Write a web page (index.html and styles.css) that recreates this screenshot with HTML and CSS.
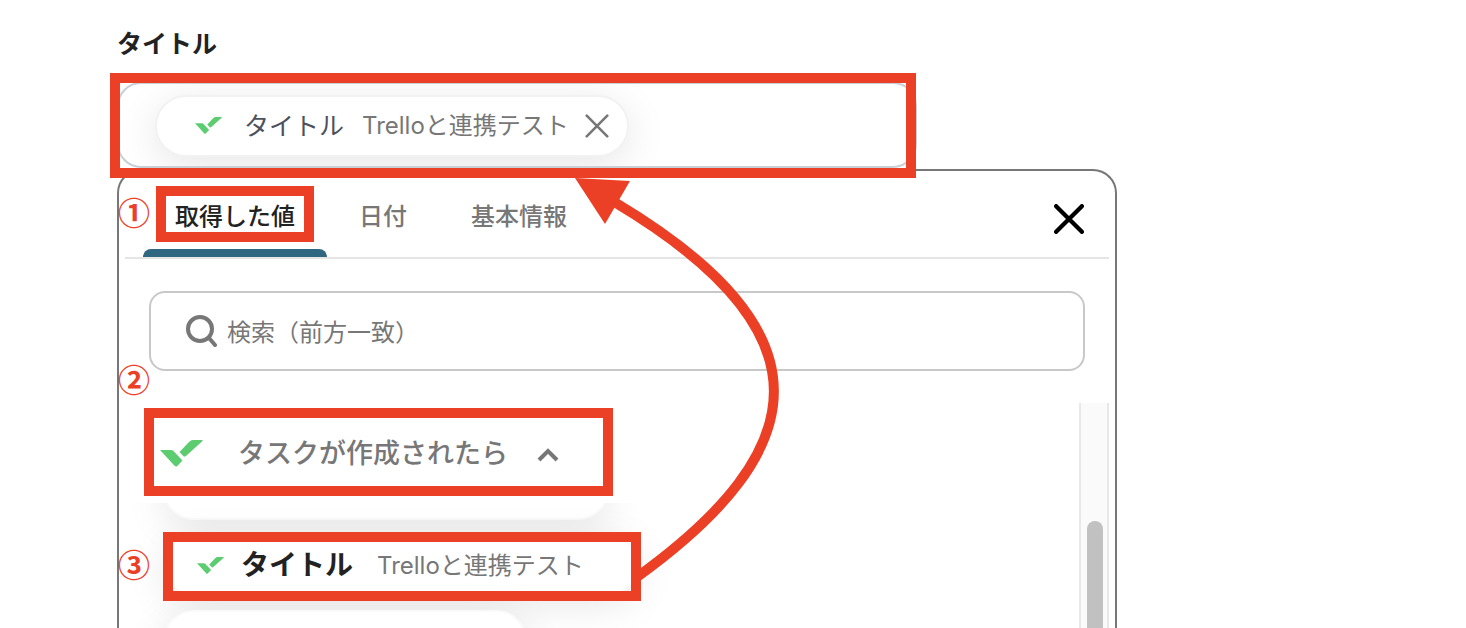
FILE: index.html
```html
<!DOCTYPE html>
<html lang="ja">
<head>
    <meta charset="UTF-8">
    <meta name="viewport" content="width=device-width, initial-scale=1.0">
    <title>タイトル</title>
    <link rel="stylesheet" href="styles.css">
</head>
<body>
    <svg class="defs" aria-hidden="true">
        <symbol id="logo" viewBox="0 0 43 27">
            <path d="M0 10h11q1.500 0 2.500 1l9 9.500-5.500 5.700q-1 .8-2.500-.5z"/>
            <path d="M19.500 12L29 2q2-2 4-2h9.500q.5.500-.5 1.500L26.500 15.500q-1 1-2.500 1.200z"/>
        </symbol>
        <symbol id="cross" viewBox="0 0 28 28">
            <path d="M2 2l24 24M26 2L2 26"/>
        </symbol>
    </svg>

    <main class="form">
        <h1 class="label">タイトル</h1>
        <div class="field">
            <div class="chip">
                <svg class="logo"><use href="#logo"/></svg>
                <span class="chip-name">タイトル</span>
                <span class="chip-value">Trelloと連携テスト</span>
                <button class="icon-button chip-remove" aria-label="削除"><svg class="cross"><use href="#cross"/></svg></button>
            </div>
        </div>

        <section class="panel">
            <div class="tabs">
                <button class="tab active">取得した値</button>
                <button class="tab">日付</button>
                <button class="tab">基本情報</button>
                <button class="icon-button panel-close" aria-label="閉じる"><svg class="cross"><use href="#cross"/></svg></button>
            </div>

            <label class="search">
                <svg class="search-icon" viewBox="0 0 32 32"><circle cx="15" cy="14" r="12"/><path d="M24 23l6 7"/></svg>
                <input type="text" placeholder="検索（前方一致）" aria-label="検索">
            </label>

            <div class="values">
                <div class="values-body">
                    <button class="group">
                        <svg class="logo logo-large"><use href="#logo"/></svg>
                        <span class="group-name">タスクが作成されたら</span>
                        <svg class="caret" viewBox="0 0 24 14"><path d="M3 12l9-9 9 9"/></svg>
                    </button>
                    <div class="list">
                        <div class="item item-first"></div>
                        <button class="item">
                            <svg class="logo"><use href="#logo"/></svg>
                            <span class="item-name">タイトル</span>
                            <span class="chip-value">Trelloと連携テスト</span>
                        </button>
                        <div class="item item-last"></div>
                    </div>
                </div>
                <div class="scrollbar"><div class="thumb"></div></div>
            </div>
        </section>
    </main>

    <!-- 操作手順の注釈 -->
    <div class="mark mark-field"></div>
    <div class="mark mark-tab"></div>
    <div class="mark mark-group"></div>
    <div class="mark mark-item"></div>
    <span class="step step-1">①</span>
    <span class="step step-2">②</span>
    <span class="step step-3">③</span>
    <svg class="arrow" viewBox="0 0 220 410" aria-hidden="true">
        <path class="arrow-line" d="M67 407C243 280 263 163 46 33"/>
        <path class="arrow-head" d="M5 8l55 3-25 43z"/>
    </svg>
</body>
</html>
```

FILE: styles.css
```css
* {
    box-sizing: border-box;
}
body {
    margin: 0;
    height: 100vh;
    overflow: hidden;
    position: relative;
    background: #fff;
    color: #222;
    font-family: Inter, "Noto Sans CJK JP", sans-serif;
    font-size: 24px;
}
button {
    font: inherit;
    color: inherit;
    background: none;
    border: none;
    padding: 0;
    cursor: pointer;
}
.defs {
    display: none;
}
.form {
    display: flex;
    flex-direction: column;
    height: 100%;
    max-width: 1117px;
    padding: 24px 0 0 117px;
}
.label {
    margin: 0 0 18px;
    font-size: 25px;
    line-height: 40px;
    font-weight: 700;
}
.field {
    display: flex;
    align-items: center;
    height: 86px;
    max-width: 800px;
    padding: 1px 36px 0;
    border: 2px solid #c9cfd6;
    border-radius: 24px;
    overflow: hidden;
}
.chip,
.item {
    display: flex;
    align-items: center;
    flex: none;
    height: 62px;
    padding: 0 18px 0 38px;
    border: 2px solid #f2f2f2;
    border-radius: 31px;
    background: #fff;
    box-shadow: 0 8px 40px rgba(0, 0, 0, 0.1);
}
.logo {
    width: 27px;
    height: 17px;
    fill: #5ccc70;
}
.logo-large {
    width: 43px;
    height: 27px;
}
.chip-name,
.chip-value,
.item-name,
.group-name {
    padding-bottom: 4px;
}
.chip-name {
    margin-left: 22px;
    font-size: 25px;
    color: #4c515c;
}
.chip-value {
    margin-left: 18px;
    font-size: 24px;
    color: #777;
}
.icon-button {
    display: flex;
}
.cross {
    fill: none;
    stroke: currentColor;
    stroke-linecap: round;
}
.chip-remove {
    margin-left: 16px;
    color: #777;
}
.chip-remove .cross {
    width: 24px;
    height: 24px;
    stroke-width: 3px;
}
.panel {
    flex: 1;
    display: flex;
    flex-direction: column;
    min-height: 0;
    margin-top: 1px;
    padding: 0 6px;
    border: 2px solid #777;
    border-bottom: none;
    border-radius: 24px 24px 0 0;
}
.tabs {
    display: flex;
    flex: none;
    height: 88px;
    padding: 0 24px 0 18px;
    border-bottom: 2px solid #e5e5e5;
}
.tab {
    position: relative;
    padding: 0 32px;
    color: #777;
    font-weight: 500;
}
.tab.active {
    color: #222;
}
.tab.active::after {
    content: "";
    position: absolute;
    left: 0;
    right: 0;
    bottom: 0;
    height: 8px;
    border-radius: 8px 8px 0 0;
    background: #2f6680;
}
.panel-close {
    align-items: center;
    margin-left: auto;
    padding: 10px 1px 0 0;
    color: #000;
}
.panel-close .cross {
    width: 30px;
    height: 30px;
    stroke-width: 4px;
}
.search {
    display: flex;
    align-items: center;
    flex: none;
    height: 80px;
    margin: 32px 24px;
    padding: 0 34px;
    border: 2px solid #c8c8c8;
    border-radius: 16px;
}
.search-icon {
    width: 32px;
    height: 32px;
    fill: none;
    stroke: #777;
    stroke-width: 4px;
    stroke-linecap: round;
}
.search input {
    flex: 1;
    margin-left: 10px;
    padding: 2px 0 0;
    border: none;
    outline: none;
    background: none;
    font: inherit;
}
.search input::placeholder {
    color: #777;
    opacity: 1;
}
.values {
    flex: 1;
    display: flex;
    min-height: 0;
}
.values-body {
    flex: 1;
    display: flex;
    flex-direction: column;
}
.group {
    display: flex;
    align-items: center;
    flex: none;
    height: 100px;
    padding-left: 35px;
    font-size: 27px;
    font-weight: 500;
    color: #777;
}
.group-name {
    margin: 0 28px 0 35px;
}
.caret {
    width: 24px;
    height: 14px;
    margin-top: 4px;
    fill: none;
    stroke: #777;
    stroke-width: 4px;
}
.list {
    flex: 1;
    display: flex;
    flex-direction: column;
    align-items: flex-start;
    gap: 14px;
    min-height: 0;
    padding-left: 38px;
    overflow: hidden;
}
.item {
    padding: 0 52px 0 32px;
    border-color: #fafafa;
}
/* 一覧は途中までスクロールした状態 */
.item-first {
    width: 446px;
    margin-top: -45px;
}
.item-last {
    width: 364px;
}
.item-name {
    margin-left: 17px;
    font-size: 28px;
    font-weight: 700;
}
.item .chip-value {
    margin-left: 24px;
}
.scrollbar {
    width: 30px;
    padding: 118px 4px 0 6px;
    border: solid #e8e8e8;
    border-width: 0 2px;
    background: #fafafa;
}
.thumb {
    height: 100%;
    border-radius: 8px 8px 0 0;
    background: #c1c1c1;
}

.mark {
    position: absolute;
    border: 10px solid #eb4026;
}
.mark-field {
    left: 110px;
    top: 73px;
    width: 806px;
    height: 105px;
}
.mark-tab {
    left: 156px;
    top: 186px;
    width: 158px;
    height: 56px;
}
.mark-group {
    left: 144px;
    top: 408px;
    width: 469px;
    height: 88px;
}
.mark-item {
    left: 163px;
    top: 532px;
    width: 478px;
    height: 69px;
}
.step {
    position: absolute;
    left: 118px;
    font-size: 32px;
    line-height: 32px;
    font-family: "Noto Sans CJK JP", sans-serif;
    font-weight: 700;
    color: #eb4026;
}
.step-1 {
    top: 195px;
}
.step-2 {
    top: 362px;
}
.step-3 {
    top: 547px;
}
.arrow {
    position: absolute;
    left: 570px;
    top: 170px;
    width: 220px;
    height: 410px;
}
.arrow-line {
    fill: none;
    stroke: #eb4026;
    stroke-width: 10px;
}
.arrow-head {
    fill: #eb4026;
}
```
